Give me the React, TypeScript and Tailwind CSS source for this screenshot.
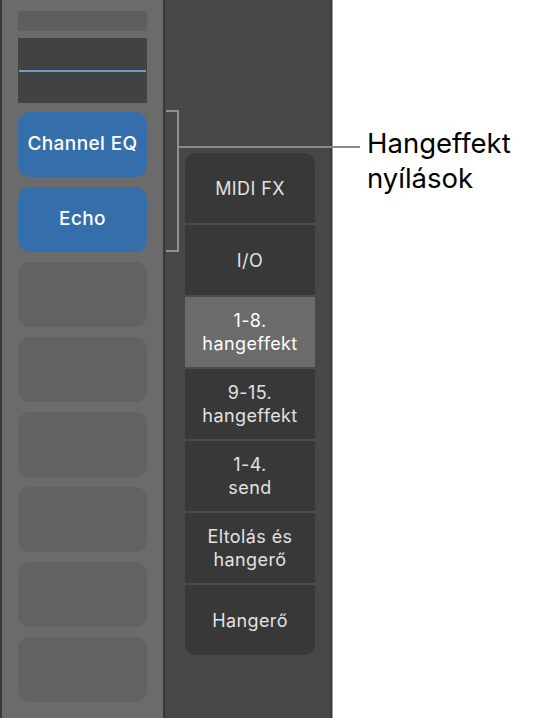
import React from "react";

const font = { fontFamily: "Inter, 'Liberation Sans', Arial, sans-serif" };

const menuRows: { label: string[]; active?: boolean }[] = [
  { label: ["MIDI FX"] },
  { label: ["I/O"] },
  { label: ["1-8.", "hangeffekt"], active: true },
  { label: ["9-15.", "hangeffekt"] },
  { label: ["1-4.", "send"] },
  { label: ["Eltolás és", "hangerő"] },
  { label: ["Hangerő"] },
];

export default function App() {
  return (
    <div className="relative flex h-[718px] w-[543px] overflow-hidden bg-white" style={font}>
      {/* Left channel strip */}
      <div className="flex h-full w-[165px] flex-col border-l-2 border-r-2 border-[#393939] bg-[#6b6b6b] pl-[16px] pt-[11px]">
        <div className="h-[20px] w-[129px] bg-[#5e5e5e]" />
        <div className="mt-[7px] flex h-[65px] w-[129px] flex-col justify-center bg-[#424242]">
          <div className="mx-[1px] mt-[1px] h-[2px] bg-[#6b9bd0]" />
        </div>
        <div className="mt-[9px] flex flex-col gap-[10px]">
          <div className="flex h-[65px] w-[129px] items-center justify-center rounded-[12px] bg-[#346fab] text-[19px] font-medium tracking-[0.4px] text-white">
            Channel EQ
          </div>
          <div className="flex h-[65px] w-[129px] items-center justify-center rounded-[12px] bg-[#346fab] text-[19px] font-medium tracking-[0.4px] text-white">
            Echo
          </div>
          {Array.from({ length: 6 }).map((_, i) => (
            <div key={i} className="h-[65px] w-[129px] rounded-[12px] bg-[#626262]" />
          ))}
        </div>
      </div>

      {/* Middle panel */}
      <div className="flex h-full w-[167px] border-r-2 border-r-[#3a3a3a] bg-[#474747] pl-[20px] pt-[153px]">
        <div className="flex h-[502px] w-[130px] flex-col gap-[2px] overflow-hidden rounded-[10px] bg-[#4b4b4b]">
          {menuRows.map((r, i) => (
            <div
              key={i}
              className={`flex h-[70px] flex-col items-center justify-center text-center text-[18px] leading-[23px] tracking-[0.4px] ${
                r.active ? "bg-[#6b6b6b] text-white" : "bg-[#383838] text-[#e2e2e2]"
              }`}
            >
              {r.label.map((l, j) => (
                <span key={j}>{l}</span>
              ))}
            </div>
          ))}
        </div>
      </div>
      <div className="h-full w-[1px] bg-[#a0a0a0]" />

      {/* Annotation bracket & leader line */}
      <div className="absolute left-[166px] top-[110px] h-[142px] w-[13px] border-y-2 border-r-2 border-[#8e8e8e]" />
      <div className="absolute left-[179px] top-[146px] h-[2px] w-[181px] bg-[#8a8a8a]" />
      <div className="absolute left-[367px] top-[126px] text-[27.5px] leading-[35px] text-black">
        <div>Hangeffekt</div>
        <div>nyílások</div>
      </div>
    </div>
  );
}
